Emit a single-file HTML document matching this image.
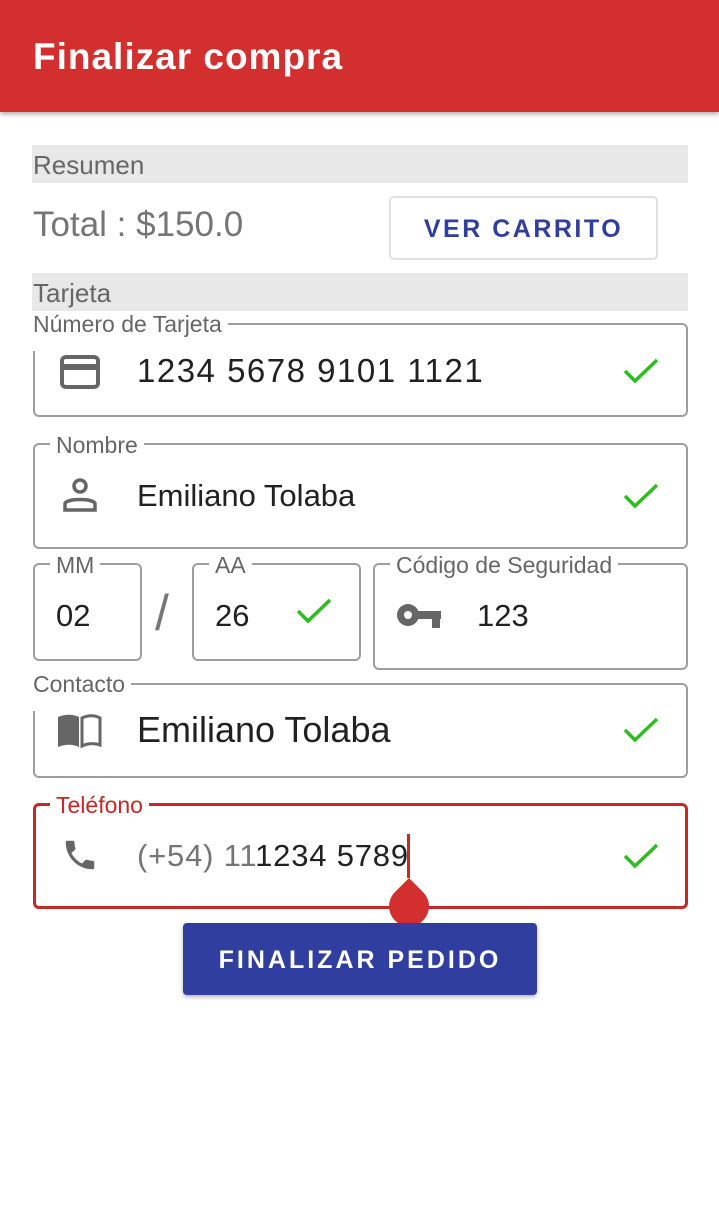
<!DOCTYPE html>
<html><head><meta charset="utf-8"><style>
*{margin:0;padding:0;box-sizing:border-box}
body{width:719px;height:1232px;background:#fff;font-family:"Liberation Sans",sans-serif;position:relative;overflow:hidden}
.hdr{position:absolute;left:0;top:0;width:719px;height:112px;background:#d32f2f;box-shadow:0 2px 5px rgba(0,0,0,.35)}
.hdr span{position:absolute;left:33px;top:36px;color:#fff;font-size:37px;font-weight:bold;letter-spacing:1px}
.band{position:absolute;left:32px;width:656px;height:38px;background:#e8e8e8;color:#666;font-size:26px;line-height:40px;padding-left:1px}
.abs{position:absolute}
.box{position:absolute;border:2px solid #9e9e9e;border-radius:6px}
.lbl{position:absolute;background:#fff;color:#666;font-size:23px;line-height:22px;padding:0 6px}
.val{position:absolute;color:#212121;font-size:31px}
.chk{position:absolute}
</style></head><body>
<div class="hdr"><span>Finalizar compra</span></div>
<div class="band" style="top:145px">Resumen</div>
<div class="abs" style="left:33px;top:205px;font-size:35px;color:#757575">Total : $150.0</div>
<div class="abs" style="left:389px;top:196px;width:269px;height:64px;border:2px solid #e0e0e0;border-radius:5px;color:#303f9f;font-size:25px;font-weight:bold;letter-spacing:2.5px;text-align:center;line-height:62px">VER CARRITO</div>
<div class="band" style="top:273px">Tarjeta</div>

<!-- Numero -->
<div class="box" style="left:33px;top:323px;width:655px;height:94px;border-top-left-radius:0"></div>
<div class="lbl" style="left:27px;top:313px;height:38px;padding-top:0">Número de Tarjeta</div>
<svg class="abs" style="left:60px;top:355px" width="40" height="34" viewBox="0 0 40 34"><rect x="2" y="2" width="36" height="30" rx="4" fill="none" stroke="#666" stroke-width="4"/><rect x="2" y="9" width="36" height="6" fill="#666"/></svg>
<div class="val" style="left:137px;top:352px;font-size:33px;letter-spacing:1.5px">1234 5678 9101 1121</div>
<svg class="chk" style="left:622px;top:357px" width="38" height="28"><path d="M3 14 L13 24 L35 3" fill="none" stroke="#2ebd20" stroke-width="3.5"/></svg>

<!-- Nombre -->
<div class="box" style="left:33px;top:443px;width:655px;height:106px"></div>
<div class="lbl" style="left:50px;top:434px">Nombre</div>
<svg class="abs" style="left:63px;top:478px" width="34" height="34" viewBox="0 0 34 34"><circle cx="17" cy="8" r="6" fill="none" stroke="#666" stroke-width="3.5"/><path d="M2 32 V26 C2 20 32 20 32 26 V32 Z" fill="none" stroke="#666" stroke-width="3.5"/></svg>
<div class="val" style="left:137px;top:478px">Emiliano Tolaba</div>
<svg class="chk" style="left:622px;top:482px" width="38" height="28"><path d="M3 14 L13 24 L35 3" fill="none" stroke="#2ebd20" stroke-width="3.5"/></svg>

<!-- MM AA -->
<div class="box" style="left:33px;top:563px;width:109px;height:98px"></div>
<div class="lbl" style="left:50px;top:554px">MM</div>
<div class="val" style="left:56px;top:598px">02</div>
<div class="abs" style="left:155px;top:584px;font-size:50px;color:#777">/</div>
<div class="box" style="left:192px;top:563px;width:169px;height:98px"></div>
<div class="lbl" style="left:209px;top:554px">AA</div>
<div class="val" style="left:215px;top:598px">26</div>
<svg class="chk" style="left:295px;top:597px" width="38" height="28"><path d="M3 14 L13 24 L35 3" fill="none" stroke="#2ebd20" stroke-width="3.5"/></svg>
<div class="box" style="left:373px;top:563px;width:315px;height:107px"></div>
<div class="lbl" style="left:390px;top:554px">Código de Seguridad</div>
<svg class="abs" style="left:397px;top:603px" width="46" height="26" viewBox="0 0 46 26"><circle cx="11" cy="12" r="11" fill="#666"/><circle cx="11" cy="12" r="4" fill="#fff"/><rect x="18" y="8" width="26" height="8" fill="#666"/><rect x="35" y="8" width="8" height="17" fill="#666"/></svg>
<div class="val" style="left:477px;top:598px">123</div>

<!-- Contacto -->
<div class="box" style="left:33px;top:683px;width:655px;height:95px;border-top-left-radius:0"></div>
<div class="lbl" style="left:27px;top:673px;height:38px">Contacto</div>
<svg class="abs" style="left:57px;top:714px" width="46" height="34" viewBox="0 0 46 34"><path d="M1 3 C8 0 16 0 22 3 V33 C16 30 8 30 1 33 Z" fill="#666"/><path d="M25 4 C31 1 38 1 43 4 V31 C38 29 31 29 25 32 Z" fill="none" stroke="#666" stroke-width="3"/></svg>
<div class="val" style="left:137px;top:709px;font-size:36px">Emiliano Tolaba</div>
<svg class="chk" style="left:622px;top:716px" width="38" height="28"><path d="M3 14 L13 24 L35 3" fill="none" stroke="#2ebd20" stroke-width="3.5"/></svg>

<!-- Telefono -->
<div class="box" style="left:33px;top:803px;width:655px;height:106px;border:3px solid #c62828"></div>
<div class="lbl" style="left:50px;top:794px;color:#c62828">Teléfono</div>
<svg class="abs" style="left:61px;top:836px" width="38" height="38" viewBox="0 0 24 24"><path fill="#666" d="M6.6 10.8c1.4 2.8 3.8 5.1 6.6 6.6l2.2-2.2c.3-.3.7-.4 1-.2 1.1.4 2.3.6 3.6.6.6 0 1 .4 1 1V20c0 .6-.4 1-1 1C10.6 21 3 13.4 3 4c0-.6.4-1 1-1h3.5c.6 0 1 .4 1 1 0 1.3.2 2.5.6 3.6.1.3 0 .7-.2 1L6.6 10.8z"/></svg>
<div class="val" style="left:137px;top:838px;letter-spacing:0.8px"><span style="color:#757575">(+54) 11</span>1234 5789</div>
<svg class="chk" style="left:622px;top:842px" width="38" height="28"><path d="M3 14 L13 24 L35 3" fill="none" stroke="#2ebd20" stroke-width="3.5"/></svg>
<div class="abs" style="left:407px;top:834px;width:3px;height:44px;background:#c62828"></div>
<svg class="abs" style="left:388px;top:876px" width="42" height="50" viewBox="0 0 42 50"><path d="M21 2 L35 16 A20 20 0 1 1 7 16 Z" fill="#d32f2f"/></svg>

<div class="abs" style="left:183px;top:923px;width:354px;height:72px;background:#303f9f;border-radius:4px;box-shadow:0 2px 4px rgba(0,0,0,.3);color:#fff;font-size:25px;font-weight:bold;letter-spacing:3px;text-align:center;line-height:74px">FINALIZAR PEDIDO</div>
</body></html>
